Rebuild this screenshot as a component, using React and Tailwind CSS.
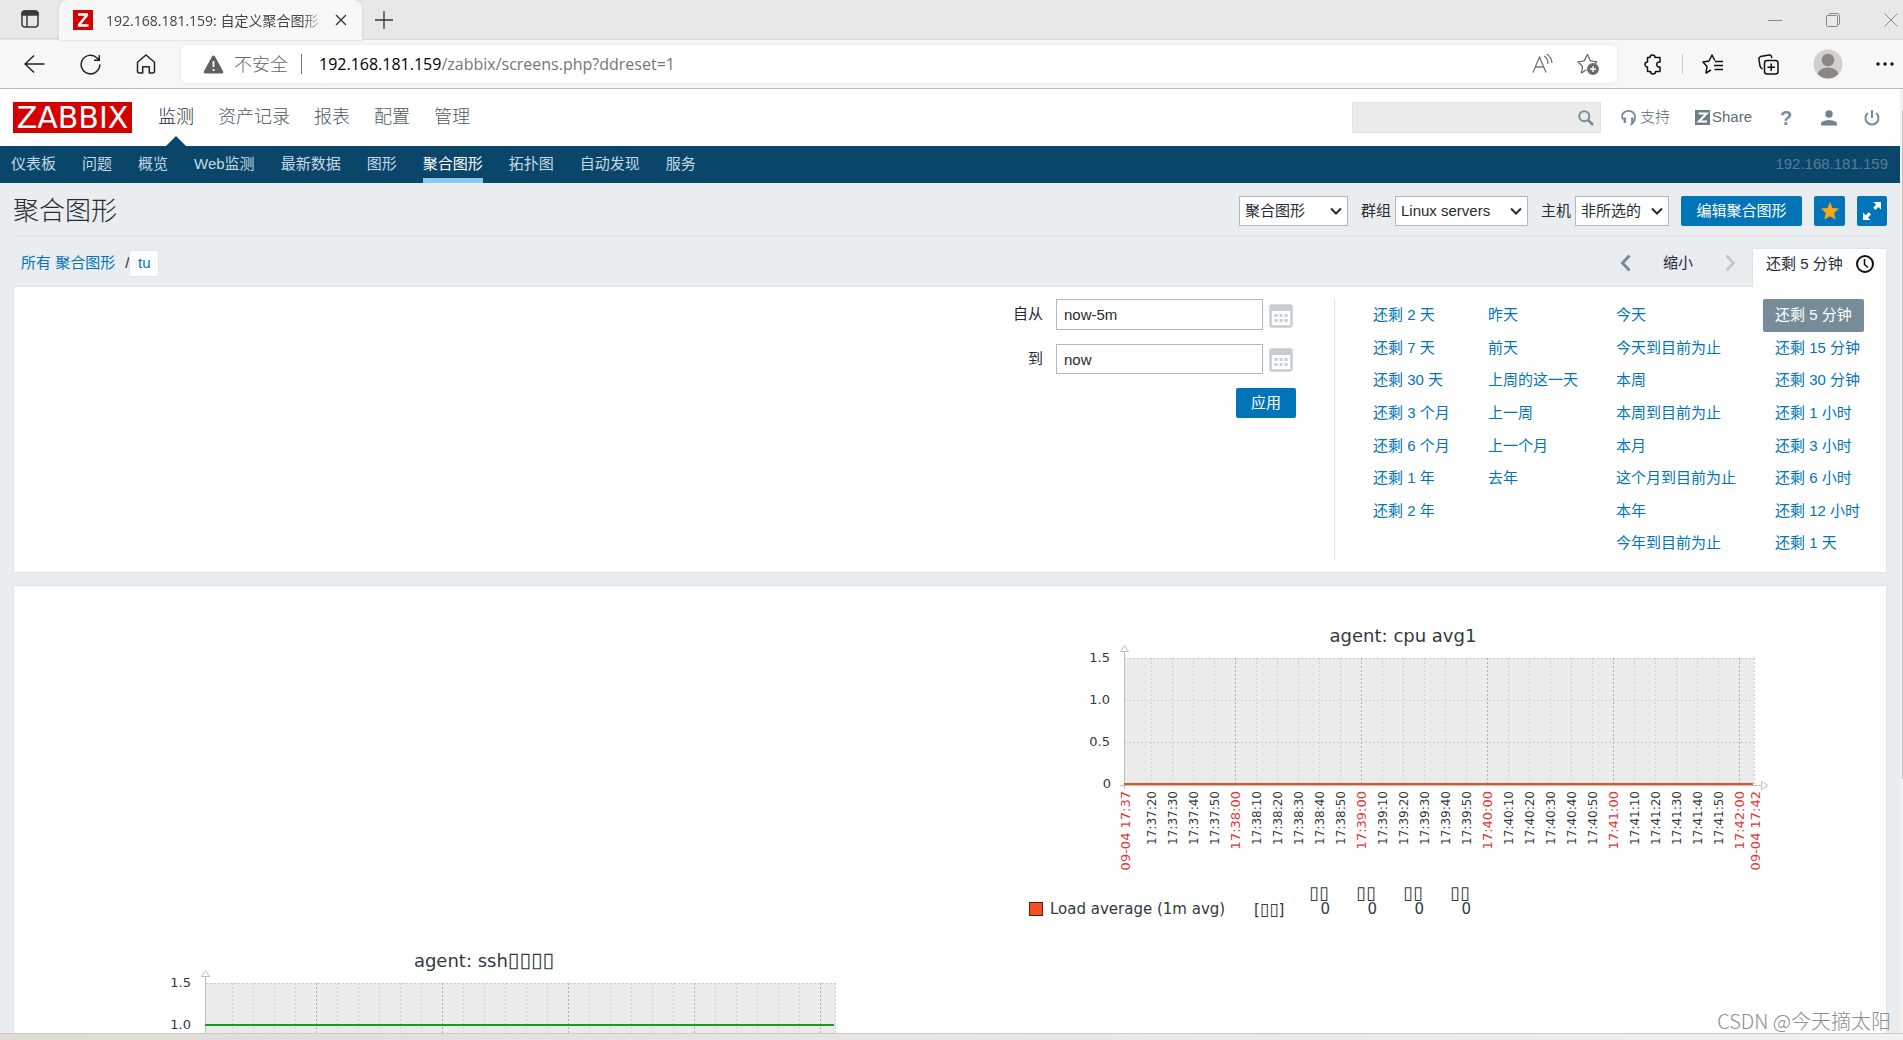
import React, {useState} from "react"

const mainMenu = ['监测', '资产记录', '报表', '配置', '管理'];
const subMenu = ['仪表板', '问题', '概览', 'Web监测', '最新数据', '图形', '聚合图形', '拓扑图', '自动发现', '服务'];

const ranges = [
    ['还剩 2 天', '还剩 7 天', '还剩 30 天', '还剩 3 个月', '还剩 6 个月', '还剩 1 年', '还剩 2 年'],
    ['昨天', '前天', '上周的这一天', '上一周', '上一个月', '去年'],
    ['今天', '今天到目前为止', '本周', '本周到目前为止', '本月', '这个月到目前为止', '本年', '今年到目前为止'],
    ['还剩 5 分钟', '还剩 15 分钟', '还剩 30 分钟', '还剩 1 小时', '还剩 3 小时', '还剩 6 小时', '还剩 12 小时', '还剩 1 天'],
];
const rangeWidths = ['w-[115px]', 'w-[128px]', 'w-[159px]', 'w-[112px]'];

// 17:37:20 ... 17:42:00, one tick every 10 seconds
const ticks = [];
for (let s = 20; s <= 300; s += 10) {
    const minute = 37 + Math.floor(s / 60);
    ticks.push({
        x: 142 + Math.round((s - 20) * 2.1),
        label: `17:${minute}:${String(s % 60).padStart(2, '0')}`,
        major: s % 60 === 0,
    });
}

const BrowserBar = () => (
    <div className="shrink-0 font-['Open_Sans','Noto_Sans_CJK_SC',sans-serif]">
        <div className="flex h-[40px] bg-[#e8e8e8]">
            <div className="flex h-[39px] w-[59px] items-center justify-center border-b border-[#d5d5d5]">
                <button aria-label="标签页操作">
                    <svg width="20" height="20" viewBox="0 0 20 20" fill="none" stroke="#3b3b3b" strokeWidth="1.5">
                        <rect x="2" y="2" width="16" height="16" rx="3"/>
                        <path d="M2 5a3 3 0 0 1 3-3h10a3 3 0 0 1 3 3v1H2z" fill="#3b3b3b"/>
                        <path d="M7 6v12"/>
                    </svg>
                </button>
            </div>
            <div className="flex w-[303px] items-center rounded-t-lg bg-[#f7f7f7] pl-[14px] shadow-[0_0_2px_#b5b5b5]">
                <svg width="20" height="20" viewBox="0 0 20 20">
                    <rect width="20" height="20" fill="#d40000"/>
                    <path d="M5 4.500h10M14.500 4.500L5.500 15.500M5 15.500h10.500" stroke="#fff" strokeWidth="2.600" fill="none"/>
                </svg>
                <span className="ml-[13px] w-[218px] overflow-hidden text-[14px] whitespace-nowrap text-[#444] [mask-image:linear-gradient(to_right,black_90%,transparent)]">192.168.181.159: 自定义聚合图形</span>
                <button aria-label="关闭标签页" className="ml-[11px]">
                    <svg width="12" height="12" viewBox="0 0 12 12" stroke="#333" strokeWidth="1.300"><path d="M1 1l10 10M11 1L1 11"/></svg>
                </button>
            </div>
            <div className="flex flex-1 items-center border-b border-[#d8d8d8]">
                <button aria-label="新建标签页" className="ml-[13px]">
                    <svg width="18" height="18" viewBox="0 0 18 18" stroke="#333" strokeWidth="1.300"><path d="M9 0v18M0 9h18"/></svg>
                </button>
                <div className="mr-[5px] ml-auto flex items-center gap-[44px]">
                    <button aria-label="最小化"><svg width="14" height="14" viewBox="0 0 14 14" stroke="#888"><path d="M0 7.500h14"/></svg></button>
                    <button aria-label="还原">
                        <svg width="14" height="14" viewBox="0 0 14 14" fill="none" stroke="#888">
                            <rect x=".5" y="2.500" width="11" height="11" rx="1"/>
                            <path d="M3 2.500V1.500a1 1 0 0 1 1-1h7a2.500 2.500 0 0 1 2.500 2.500v7.500a1 1 0 0 1-1 1h-1"/>
                        </svg>
                    </button>
                    <button aria-label="关闭"><svg width="14" height="14" viewBox="0 0 14 14" stroke="#888"><path d="M.5.5l13 13M13.500.5l-13 13"/></svg></button>
                </div>
            </div>
        </div>
        <div className="flex h-[49px] items-center border-b border-[#b9b9b9] bg-[#f7f7f7]">
            <div className="flex w-[181px] items-center gap-[35px] pl-[24px]">
                <button aria-label="返回">
                    <svg width="21" height="20" viewBox="0 0 21 20" fill="none" stroke="#222" strokeWidth="1.500"><path d="M20.500 10H1M10 1.500L1 10l9 8.500"/></svg>
                </button>
                <button aria-label="刷新">
                    <svg width="21" height="21" viewBox="0 0 21 21" fill="none" stroke="#222" strokeWidth="1.500"><path d="M19.800 10.500a9.300 9.300 0 1 1-3-6.800L19 6M19.300 1v5.200H14"/></svg>
                </button>
                <button aria-label="主页">
                    <svg width="20" height="20" viewBox="0 0 20 20" fill="none" stroke="#222" strokeWidth="1.500"><path d="M1.500 8.200L10 1l8.500 7.200V17a2 2 0 0 1-2 2h-3.200v-6.200H6.700V19H3.500a2 2 0 0 1-2-2z" strokeLinejoin="round"/></svg>
                </button>
            </div>
            <div className="flex h-[38px] flex-1 items-center rounded-md bg-white pl-[22px] shadow-[0_0_4px_#e5e5e5]">
                <svg width="21" height="19" viewBox="0 0 21 19"><path d="M10.500 0.500q1 0 1.500 1l8.200 15q.6 2-1.200 2H2q-1.800 0-1.200-2L9 1.500q.5-1 1.500-1z" fill="#616161"/><path d="M10.500 6v6M10.500 14v2" stroke="#fff" strokeWidth="1.800"/></svg>
                <span className="ml-[10px] text-[18px] font-light text-[#666]">不安全</span>
                <span className="ml-[13px] h-[20px] w-px bg-[#777]"/>
                <div className="relative ml-[17px] flex-1 text-[16px]">
                    <input aria-label="地址" className="w-full text-transparent caret-black outline-none" defaultValue="192.168.181.159/zabbix/screens.php?ddreset=1"/>
                    <span aria-hidden="true" className="pointer-events-none absolute inset-0 text-[#767676]"><span className="text-black">192.168.181.159</span>/zabbix/screens.php?ddreset=1</span>
                </div>
                <div className="flex items-center gap-[24px] pr-[18px]">
                    <button aria-label="朗读此页内容">
                        <svg width="21" height="20" viewBox="0 0 21 20" fill="none" stroke="#777" strokeWidth="1.300"><path d="M1 18.500L7.500 3 14 18.500M3.500 13h8M12 2q4 2 4 8M14.500 0q5 3 5.500 9"/></svg>
                    </button>
                    <button aria-label="添加到收藏夹">
                        <svg width="22" height="22" viewBox="0 0 22 22" fill="none" stroke="#6b6b6b" strokeWidth="1.300"><path d="M9.500 16.800L4.500 20l1-6.500L1 8.800l6.200-.9L10.500 1.500l3 6.400 6.500.9-2 2" strokeLinejoin="round"/><circle cx="16" cy="16" r="5.300" fill="#6b6b6b"/><path d="M16 13v6M13 16h6" stroke="#fff"/></svg>
                    </button>
                </div>
            </div>
            <div className="flex w-[286px] items-center pl-[26px]">
                <button aria-label="扩展">
                    <svg width="20" height="21" viewBox="0 0 20 21" fill="none" stroke="#111" strokeWidth="1.500"><path d="M4.500 3.500H7a2.500 2.500 0 0 1 5 0h5v4.500a2.600 2.600 0 1 0 0 5v4.500h-4.500a2.500 2.500 0 0 1-5 0h-3V13a2.500 2.500 0 0 1 0-5z" strokeLinejoin="round"/></svg>
                </button>
                <span className="mx-[19px] h-[20px] w-px bg-[#c8c8c8]"/>
                <button aria-label="收藏夹">
                    <svg width="21" height="20" viewBox="0 0 21 20" fill="none" stroke="#111" strokeWidth="1.500"><path d="M9 16l-5 3 1-6.500L1 8l6-1 3-6 2.800 5.500M13 7.500h8M12 11.500h9M12.500 15.500h8.500" strokeLinejoin="round"/></svg>
                </button>
                <button aria-label="集锦" className="ml-[35px]">
                    <svg width="21" height="21" viewBox="0 0 21 21" fill="none" stroke="#111" strokeWidth="1.500"><rect x="6.500" y="6.500" width="13.500" height="13.500" rx="2.500"/><path d="M13.200 9.500v7.500M9.500 13.200H17M4.500 15Q2.500 14 2 12L.9 5Q.7 3.200 2.500 2.600L11 1q2-.3 2.500 1.500L14 4"/></svg>
                </button>
                <button aria-label="个人资料" className="ml-[34px]">
                    <svg width="30" height="30" viewBox="0 0 30 30"><circle cx="15" cy="15" r="14.500" fill="#d2d0cd"/><circle cx="15" cy="11" r="6.300" fill="#8a8785"/><path d="M4.500 25q2.500-6.500 10.500-6.500T25.500 25Q21 29.500 15 29.500T4.500 25z" fill="#8a8785"/></svg>
                </button>
                <button aria-label="设置及其他" className="ml-[33px]">
                    <svg width="18" height="4" viewBox="0 0 18 4" fill="#111"><circle cx="2" cy="2" r="1.700"/><circle cx="9" cy="2" r="1.700"/><circle cx="16" cy="2" r="1.700"/></svg>
                </button>
            </div>
        </div>
    </div>
);

const Header = () => (
    <header>
        <div className="flex h-[57px] items-center bg-white px-[13px]">
            <a href="#" className="flex h-[31px] w-[119px] items-center justify-center bg-[#d40000] font-['DejaVu_Sans',sans-serif] text-[30px] leading-[31px] text-white">ZABBIX</a>
            <nav className="ml-[26px] flex h-full gap-[24px]">
                {mainMenu.map((item, i) => (
                    <a key={item} href="#" className={"relative flex items-center text-[18px] font-light " + (i === 0 ? "text-[#1f2c33]" : "text-[#4a5961]")}>
                        {item}
                        {i === 0 && <span className="absolute bottom-0 left-1/2 -translate-x-1/2 border-x-10 border-b-10 border-x-transparent border-b-[#0a466a]"/>}
                    </a>
                ))}
            </nav>
            <div className="mr-[7px] ml-auto flex items-center text-[15px] text-[#5b6d76]">
                <form className="relative h-[31px] w-[249px]" onSubmit={e => e.preventDefault()}>
                    <input aria-label="搜索" className="h-full w-full border border-[#dfe4e7] bg-[#ebebeb] px-2 outline-none"/>
                    <button aria-label="搜索" className="absolute top-2 right-[7px]">
                        <svg width="16" height="16" viewBox="0 0 16 16" fill="none" stroke="#768d99" strokeWidth="2"><circle cx="6.300" cy="6.300" r="5"/><path d="M10 10l5 5" strokeWidth="2.600"/></svg>
                    </button>
                </form>
                <a href="#" className="ml-[20px] flex items-center gap-[4px] font-light">
                    <svg width="15" height="16" viewBox="0 0 15 16" fill="none" stroke="#768d99" strokeWidth="1.800"><path d="M2.500 9.500Q1 8 1 6.500a6.500 5.600 0 0 1 13 0q0 6-4.500 8.500"/><path d="M3.800 7.500v5.500M11.300 7.500v5.500" strokeWidth="2.400"/></svg>
                    支持
                </a>
                <a href="#" className="ml-[25px] flex items-center gap-[2px]">
                    <svg width="15" height="15" viewBox="0 0 15 15"><rect width="15" height="15" fill="#6a7f8a"/><path d="M3.500 3.500h8L4 11.500h8" stroke="#fff" strokeWidth="2.200" fill="none"/></svg>
                    Share
                </a>
                <a href="#" aria-label="帮助" className="ml-[27px] w-[14px] text-center text-[20px] leading-[20px] font-bold text-[#768d99]">?</a>
                <a href="#" aria-label="用户资料" className="ml-[28px]">
                    <svg width="16" height="16" viewBox="0 0 16 16" fill="#6f8591"><circle cx="8" cy="4" r="3.700"/><path d="M0 15.500v-2q0-3 8-3.500 8 .5 8 3.500v2z"/></svg>
                </a>
                <a href="#" aria-label="退出" className="ml-[27px]">
                    <svg width="16" height="16" viewBox="0 0 16 16" fill="none" stroke="#768d99" strokeWidth="2"><path d="M4 3a6.500 6.500 0 1 0 8 0M8 0v8"/></svg>
                </a>
            </div>
        </div>
        <nav className="flex h-[37px] items-center gap-[26px] bg-[#0a466a] pr-[12px] pl-[11px] text-[15px] text-[#c5d9e6]">
            {subMenu.map(item => (
                <a key={item} href="#" className={"flex h-full items-center " + (item === '聚合图形' ? "border-b-5 border-[#87c9f5] pt-[5px] text-white" : "")}>{item}</a>
            ))}
            <span className="ml-auto text-[#557f99]">192.168.181.159</span>
        </nav>
    </header>
);

const Dropdown = ({id, label, value, width}) => (
    <div className="flex items-center gap-[4px]">
        {label && <label htmlFor={id}>{label}</label>}
        <div className="relative">
            <select id={id} aria-label={label || value} className={"h-[30px] appearance-none border border-[#acbbc2] bg-white pl-[5px] outline-none " + width}>
                <option>{value}</option>
            </select>
            <svg className="pointer-events-none absolute top-[11px] right-[6px]" width="12" height="9" viewBox="0 0 12 9" fill="none" stroke="#1f2c33" strokeWidth="2"><path d="M1 1.500l5 5 5-5"/></svg>
        </div>
    </div>
);

const CalendarButton = ({label}) => (
    <button type="button" aria-label={label} className="pt-[2px]">
        <svg width="24" height="24" viewBox="0 0 24 24">
            <rect x="1.500" y="1.500" width="21" height="21" rx="1.500" fill="#fff" stroke="#c3cdd2" strokeWidth="2.500"/>
            <path d="M1 1h22v6H1z" fill="#c3cdd2"/>
            <path d="M5.500 11.500h13M5.500 16.500h13" stroke="#c3cdd2" strokeWidth="3" strokeDasharray="3 2"/>
        </svg>
    </button>
);

const TimeFilter = () => {
    const [from, setFrom] = useState('now-5m');
    const [to, setTo] = useState('now');
    const [selected, setSelected] = useState('还剩 5 分钟');

    return (
        <section>
            <div className="flex items-end">
                <div className="flex h-[50px] flex-1 items-center pt-[4px] pl-[8px]">
                    <a href="#" className="text-[#0275b8]">所有 聚合图形</a>
                    <span className="ml-[10px]">/</span>
                    <a href="#" className="flex h-[27px] w-[30px] items-center justify-center rounded-xs border border-[#dfe4e7] bg-white text-[#0275b8]">tu</a>
                    <div className="ml-auto flex items-center pr-[16px]">
                        <button aria-label="向前"><svg width="11" height="18" viewBox="0 0 11 18" fill="none" stroke="#768d99" strokeWidth="3"><path d="M9.500 1.500L2.500 9l7 7.500"/></svg></button>
                        <button className="mx-[32px]">缩小</button>
                        <button aria-label="向后" disabled><svg width="11" height="18" viewBox="0 0 11 18" fill="none" stroke="#c0cbd1" strokeWidth="3"><path d="M1.500 1.500l7 7.500-7 7.500"/></svg></button>
                    </div>
                </div>
                {/* open tab, covers the top border of the panel */}
                <button className="relative -mb-px flex h-[39px] w-[135px] items-center gap-[12px] rounded-t-xs border border-b-0 border-[#dfe4e7] bg-white pb-[8px] pl-[13px]">
                    {selected}
                    <svg width="20" height="20" viewBox="0 0 20 20" fill="none" stroke="#111" strokeWidth="2"><circle cx="10" cy="10" r="8"/><path d="M9.500 5v5.500l3.500 3" strokeWidth="1.600"/></svg>
                </button>
            </div>
            <div className="flex justify-end border border-[#dfe4e7] bg-white py-[12px] pr-[11px]">
                <form className="flex flex-col gap-[14px] pr-[38px] whitespace-nowrap" onSubmit={e => e.preventDefault()}>
                    <div className="flex items-center justify-end gap-[6px] pr-[3px]">
                        <label htmlFor="from" className="mr-[7px]">自从</label>
                        <input id="from" value={from} onChange={e => setFrom(e.target.value)} className="h-[31px] w-[207px] border border-[#acbbc2] px-[7px] outline-none"/>
                        <CalendarButton label="选择开始时间"/>
                    </div>
                    <div className="flex items-center justify-end gap-[6px] pr-[3px]">
                        <label htmlFor="to" className="mr-[7px]">到</label>
                        <input id="to" value={to} onChange={e => setTo(e.target.value)} className="h-[30px] w-[207px] border border-[#acbbc2] px-[7px] outline-none"/>
                        <CalendarButton label="选择结束时间"/>
                    </div>
                    <button className="h-[30px] w-[60px] self-end rounded-xs bg-[#0275b8] text-white">应用</button>
                </form>
                <div className="flex h-[261px] border-l border-[#dfe4e7] pl-[26px]">
                    {ranges.map((column, i) => (
                        <div key={i} className={"grid grid-rows-8 justify-items-start " + rangeWidths[i]}>
                            {column.map(item => (
                                <button key={item} onClick={() => setSelected(item)}
                                        className={"rounded-xs px-[12px] text-left whitespace-nowrap " + (item === selected ? "bg-[#768d99] text-white" : "text-[#0275b8]")}>{item}</button>
                            ))}
                        </div>
                    ))}
                </div>
            </div>
        </section>
    );
};

const Chart = ({title, tofu, color, value, legend}) => {
    const lineY = 164 - value * 84;
    return (
        <svg width="801" height="325" viewBox="0 0 801 325" className="mx-auto font-['DejaVu_Sans',sans-serif]" fill="#2f3b41" role="img" aria-label={title}>
            <text x="394" y="22" fontSize="18" textAnchor="middle">{title}<tspan fontSize="21">{tofu}</tspan></text>
            <rect x="116" y="38" width="629" height="126" fill="#ebebeb"/>
            <g stroke="#c3cdd2" strokeDasharray="2 2" shapeRendering="crispEdges">
                {[38, 80, 122].map(y => <path key={y} d={`M116 ${y}.5H745`}/>)}
                {ticks.map(t => <path key={t.label} d={`M${t.x}.5 38V164`} stroke={t.major ? "#a3b1b8" : "#ccd5d9"}/>)}
                <path d="M745.5 38V164"/>
            </g>
            <g stroke="#b5c2c9" fill="#fff">
                <path d="M115.500 30V169M111 165.500H756" fill="none"/>
                <path d="M111.500 31.500l4-6 4 6zM752.500 161.500l6.500 4-6.500 4z"/>
            </g>
            <path d={`M115 ${lineY}H744`} stroke={color} strokeWidth="2"/>
            <g fontSize="13" textAnchor="end">
                <text x="101" y="42">1.5</text>
                <text x="101" y="84">1.0</text>
                <text x="101" y="126">0.5</text>
                <text x="102" y="168">0</text>
            </g>
            <g fontSize="12" textAnchor="end">
                {ticks.map(t => (
                    <text key={t.label} transform={`translate(${t.x + 5} 171) rotate(-90)`} fontSize={t.major ? 13 : 12} fill={t.major ? "#e33734" : "#2f3b41"}>{t.label}</text>
                ))}
                <g fontSize="13" fill="#e33734">
                    <text transform="translate(121 171) rotate(-90)">09-04 17:37</text>
                    <text transform="translate(751 171) rotate(-90)">09-04 17:42</text>
                </g>
            </g>
            <rect x="20.500" y="282.500" width="13" height="13" fill={color} stroke="#5c1f0d"/>
            <g fontSize="15">
                <text x="41" y="294">{legend}</text>
                <text x="245" y="295">[<tspan fontSize="17">▯▯</tspan>]</text>
                {[0, 1, 2, 3].map(i => (
                    <g key={i}>
                        <text x={300 + i * 47} y="279" fontSize="18">▯▯</text>
                        <text x={321 + i * 47} y="294" textAnchor="end">0</text>
                    </g>
                ))}
            </g>
        </svg>
    );
};

const App = () => {
    return (
        <div className="relative flex h-screen flex-col overflow-hidden bg-[#e9edf0] font-['Liberation_Sans','Noto_Sans_CJK_SC',sans-serif] text-[15px] text-[#1f2c33]">
            <BrowserBar/>
            <div className="flex min-h-0 flex-1">
                <div className="min-w-0 flex-1 overflow-hidden">
                    <Header/>
                    <main className="px-[13px]">
                        <div className="flex h-[53px] items-center border-b border-[#dfe4e7] pt-[4px]">
                            <h1 className="text-[26px] font-light">聚合图形</h1>
                            <div className="ml-auto flex items-center gap-[12px]">
                                <div className="flex items-center gap-[13px]">
                                    <Dropdown id="view" value="聚合图形" width="w-[109px]"/>
                                    <Dropdown id="group" label="群组" value="Linux servers" width="w-[133px]"/>
                                    <Dropdown id="host" label="主机" value="非所选的" width="w-[94px]"/>
                                </div>
                                <button className="h-[30px] w-[121px] rounded-xs bg-[#0275b8] text-white">编辑聚合图形</button>
                                <button aria-label="收藏" className="flex h-[30px] w-[31px] items-center justify-center rounded-xs bg-[#0275b8]">
                                    <svg width="18" height="18" viewBox="0 0 18 18" fill="#f5a811"><path d="M9 0l2.600 6 6.400.6-4.800 4.400 1.400 6.500L9 14.200l-5.600 3.300 1.400-6.500L0 6.600 6.400 6z"/></svg>
                                </button>
                                <button aria-label="全屏" className="flex h-[30px] w-[30px] items-center justify-center rounded-xs bg-[#0275b8]">
                                    <svg width="18" height="18" viewBox="0 0 18 18" fill="#fff"><path d="M10.500 0H18v7.500l-2.500-2.500-3 3-2.300-2.300 3-3zM0 10.500V18h7.500L5 15.500l3-3-2.300-2.300-3 3z"/></svg>
                                </button>
                            </div>
                        </div>
                        <TimeFilter/>
                        <section className="mt-[12px] grid grid-cols-2 border border-[#dfe4e7] bg-white px-[17px] pt-[34px]">
                            <div/>
                            <Chart title="agent: cpu avg1" color="#f24f1d" value={0} legend="Load average (1m avg)"/>
                            <Chart title="agent: ssh" tofu="▯▯▯▯" color="#1a9c1a" value={1} legend="ssh"/>
                            <div/>
                        </section>
                    </main>
                </div>
                <div className="w-[3px] shrink-0 bg-[#f1f1f1] pt-[21px] pl-[2px]"><div className="h-[669px] bg-[#c1c1c1]"/></div>
            </div>
            <div className="h-[7px] shrink-0 border-t border-[#cfcac6] bg-linear-to-r from-[#dfdbd7] to-[#f1f1f1]"/>
            <span className="absolute right-[12px] bottom-[5px] font-['Noto_Sans_CJK_SC',sans-serif] text-[20px] leading-[28px] font-light text-[#8d8d8d]">CSDN @今天摘太阳</span>
        </div>
    );
}

export default App;
